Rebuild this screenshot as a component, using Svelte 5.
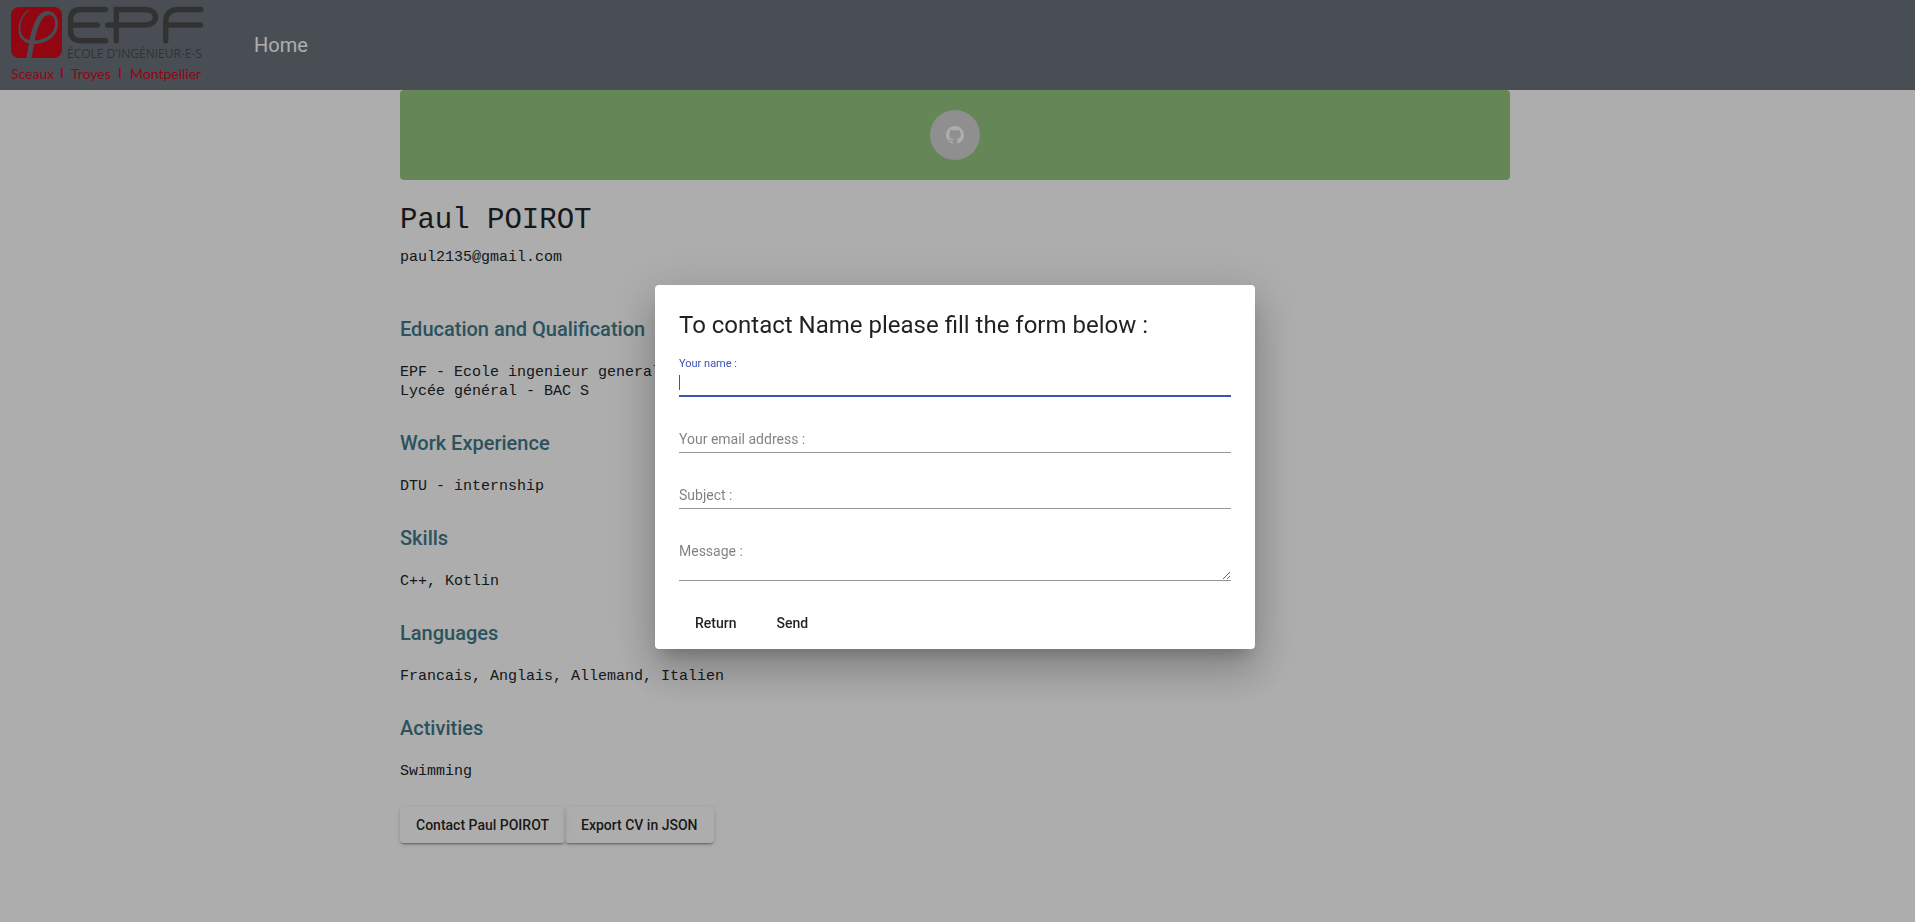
<script>
  import { onMount } from 'svelte';

  const sections = [
    { title: 'Education and Qualification', lines: ['EPF - Ecole ingenieur general', 'Lycée général - BAC S'] },
    { title: 'Work Experience', lines: ['DTU - internship'] },
    { title: 'Skills', lines: ['C++, Kotlin'] },
    { title: 'Languages', lines: ['Francais, Anglais, Allemand, Italien'] },
    { title: 'Activities', lines: ['Swimming'] }
  ];

  let nameInput;
  onMount(() => nameInput.focus());
</script>

<div class="page">
  <nav class="navbar">
    <a class="brand" href="#home" aria-label="EPF">
      <svg class="logo" width="204" height="84" viewBox="0 0 204 84">
        <rect x="6" y="4" width="51" height="51" rx="8" fill="#d60a19" />
        <path
          d="M23.500 7.500C17.500 12 14.800 19 14.900 26C15.200 34 21 38.500 30 38C43 37 51.500 29 50.500 19C49.500 10.500 42.500 9.500 38 14.500C32.500 21 30 32 28.500 42L26 54.500H22L24.500 40C26.500 28 30 15.500 36.500 10.500C43.500 5.500 52 10 52.500 20C53 32 43 39.500 31 40.500C20.500 41 14 36 14 27.500C14 18.500 17.500 11 23.500 7.500Z"
          fill="#6c737d" stroke="#6c737d" stroke-width="1" />
        <g fill="none" stroke="#4a4b4b" stroke-width="5.400" stroke-linecap="round">
          <path d="M100.500 6.500H76Q65.500 6.500 65.500 17V27.500Q65.500 37.700 76 37.700H100.500M67 22H92.500" />
          <path d="M102.700 22H140C154 22 154 6.500 140 6.500H111.300V37.700" />
          <path d="M196 6.500H174Q160.700 6.500 160.700 19V37.700M162 22H195.500" />
        </g>
        <text x="62" y="55" class="school">ÉCOLE D'INGÉNIEUR-E-S</text>
        <text x="6" y="76" class="city">Sceaux</text>
        <text x="55" y="75" class="city">I</text>
        <text x="66" y="76" class="city">Troyes</text>
        <text x="113" y="75" class="city">I</text>
        <text x="125" y="76" class="city">Montpellier</text>
      </svg>
    </a>
    <a class="home" href="#home">Home</a>
  </nav>

  <main>
    <div class="container">
      <header class="banner">
        <a class="github" href="#github" aria-label="GitHub">
          <svg width="18" height="18" viewBox="0 0 16 16" fill="#fff">
            <path d="M8 0C3.580 0 0 3.580 0 8c0 3.540 2.290 6.530 5.470 7.590.4.070.55-.17.55-.38 0-.19-.01-.82-.01-1.490-2.010.37-2.530-.49-2.690-.94-.09-.23-.48-.94-.82-1.130-.28-.15-.68-.52-.01-.53.63-.01 1.080.58 1.230.82.72 1.210 1.870.87 2.330.66.070-.52.28-.87.51-1.070-1.780-.2-3.640-.89-3.640-3.950 0-.87.31-1.590.82-2.150-.08-.2-.36-1.020.08-2.120 0 0 .67-.21 2.200.82.64-.18 1.320-.27 2-.27s1.360.09 2 .27c1.530-1.040 2.200-.82 2.200-.82.44 1.100.16 1.920.08 2.120.51.56.82 1.270.82 2.150 0 3.070-1.870 3.750-3.650 3.950.29.25.54.73.54 1.480 0 1.070-.01 1.930-.01 2.200 0 .21.15.46.55.38A8.010 8.010 0 0 0 16 8c0-4.420-3.580-8-8-8z" />
          </svg>
        </a>
      </header>

      <h1>Paul POIROT</h1>
      <p class="email">paul2135@gmail.com</p>

      {#each sections as section}
        <section>
          <h2>{section.title}</h2>
          <p>
            {#each section.lines as line}<span>{line}</span>{/each}
          </p>
        </section>
      {/each}

      <div class="actions">
        <button class="raised">Contact Paul POIROT</button>
        <button class="raised">Export CV in JSON</button>
      </div>
    </div>
  </main>
</div>

<div class="backdrop">
  <form class="dialog" aria-labelledby="dialog-title" onsubmit={(e) => e.preventDefault()}>
    <h2 id="dialog-title">To contact Name please fill the form below :</h2>
    <div class="field">
      <label for="name">Your name :</label>
      <input id="name" type="text" bind:this={nameInput} />
    </div>
    <div class="field">
      <label for="email">Your email address :</label>
      <input id="email" type="email" />
    </div>
    <div class="field">
      <label for="subject">Subject :</label>
      <input id="subject" type="text" />
    </div>
    <div class="field">
      <label for="message">Message :</label>
      <textarea id="message"></textarea>
    </div>
    <div class="dialog-actions">
      <button type="button">Return</button>
      <button type="submit">Send</button>
    </div>
  </form>
</div>

<style>
  :global(body) {
    margin: 0;
    background: #fff;
    color: #212529;
    font-family: Roboto, sans-serif;
  }
  * {
    box-sizing: border-box;
  }
  h1,
  h2,
  p {
    margin: 0;
  }
  button {
    border: 0;
    background: transparent;
    color: rgba(0, 0, 0, 0.87);
    font: 500 14px/36px Roboto, sans-serif;
    padding: 0 16px;
    border-radius: 4px;
  }
  .navbar {
    display: flex;
    align-items: center;
    gap: 45px;
    height: 90px;
    padding-left: 5px;
    background: #6c737d;
  }
  .brand,
  .logo {
    display: block;
  }
  .school {
    font-family: "Open Sans", sans-serif;
    font-size: 12px;
    fill: #4a4b4b;
  }
  .city {
    font-family: Lato, sans-serif;
    font-size: 14px;
    fill: #d60a19;
  }
  .home {
    color: #fff;
    font-size: 20px;
    line-height: 30px;
    text-decoration: none;
  }
  main {
    padding-right: 5px;
  }
  .container {
    max-width: 1110px;
    margin: 0 auto;
    padding-bottom: 40px;
  }
  .banner {
    display: flex;
    align-items: center;
    justify-content: center;
    height: 90px;
    border-radius: 4px;
    background: #96c680;
  }
  .github {
    display: flex;
    align-items: center;
    justify-content: center;
    width: 50px;
    height: 50px;
    border-radius: 50%;
    background: #d3d3d3;
  }
  h1 {
    margin-top: 22px;
    font: 400 29px/38px Consolas, "Liberation Mono", monospace;
  }
  .email,
  section p {
    font: 400 15px/19px Consolas, "Liberation Mono", monospace;
  }
  .email {
    margin-top: 8px;
    margin-bottom: 48px;
  }
  section {
    margin-bottom: 28px;
  }
  section h2 {
    margin-bottom: 20px;
    color: #407a8a;
    font-size: 20px;
    font-weight: 500;
    line-height: 28px;
  }
  section span {
    display: block;
  }
  section:last-of-type {
    margin-bottom: 26px;
  }
  .actions {
    display: flex;
  }
  .raised {
    box-shadow: 0 3px 1px -2px rgba(0, 0, 0, 0.2), 0 2px 2px 0 rgba(0, 0, 0, 0.14), 0 1px 5px 0 rgba(0, 0, 0, 0.12);
  }
  .backdrop {
    position: fixed;
    inset: 0;
    display: flex;
    align-items: center;
    justify-content: center;
    padding-right: 5px;
    background: rgba(0, 0, 0, 0.32);
  }
  .dialog {
    width: 600px;
    max-width: 80vw;
    margin-top: 12px;
    padding: 24px 24px 8px;
    border-radius: 4px;
    background: #fff;
    box-shadow: 0 11px 15px -7px rgba(0, 0, 0, 0.2), 0 24px 38px 3px rgba(0, 0, 0, 0.14), 0 9px 46px 8px rgba(0, 0, 0, 0.12);
  }
  .dialog h2 {
    margin-bottom: 16px;
    color: rgba(0, 0, 0, 0.87);
    font-size: 24px;
    font-weight: 400;
    line-height: 32px;
  }
  .field {
    display: grid;
    margin-bottom: 16px;
  }
  .field label,
  .field input,
  .field textarea {
    grid-area: 1 / 1;
  }
  .field label {
    justify-self: start;
    align-self: start;
    padding-top: 17px;
    color: rgba(0, 0, 0, 0.5);
    font-size: 14px;
    line-height: 18px;
    pointer-events: none;
  }
  .field input,
  .field textarea {
    width: 100%;
    height: 40px;
    padding: 14px 0 0;
    border: 0;
    border-bottom: 1px solid #949494;
    border-radius: 0;
    outline: 0;
    background: transparent;
    font: 400 14px/16px Roboto, sans-serif;
    caret-color: #3f51b5;
  }
  .field textarea {
    height: 56px;
    resize: vertical;
  }
  .field:focus-within label {
    padding-top: 0;
    color: #3f51b5;
    font-size: 11px;
    line-height: 14px;
  }
  .field input:focus {
    border-bottom: 2px solid #3f51b5;
    background: linear-gradient(#3f51b5, #3f51b5) 0 18px / 1px 15px no-repeat;
    caret-color: transparent;
  }
  .dialog-actions {
    display: flex;
    gap: 8px;
    padding-top: 8px;
  }
</style>
